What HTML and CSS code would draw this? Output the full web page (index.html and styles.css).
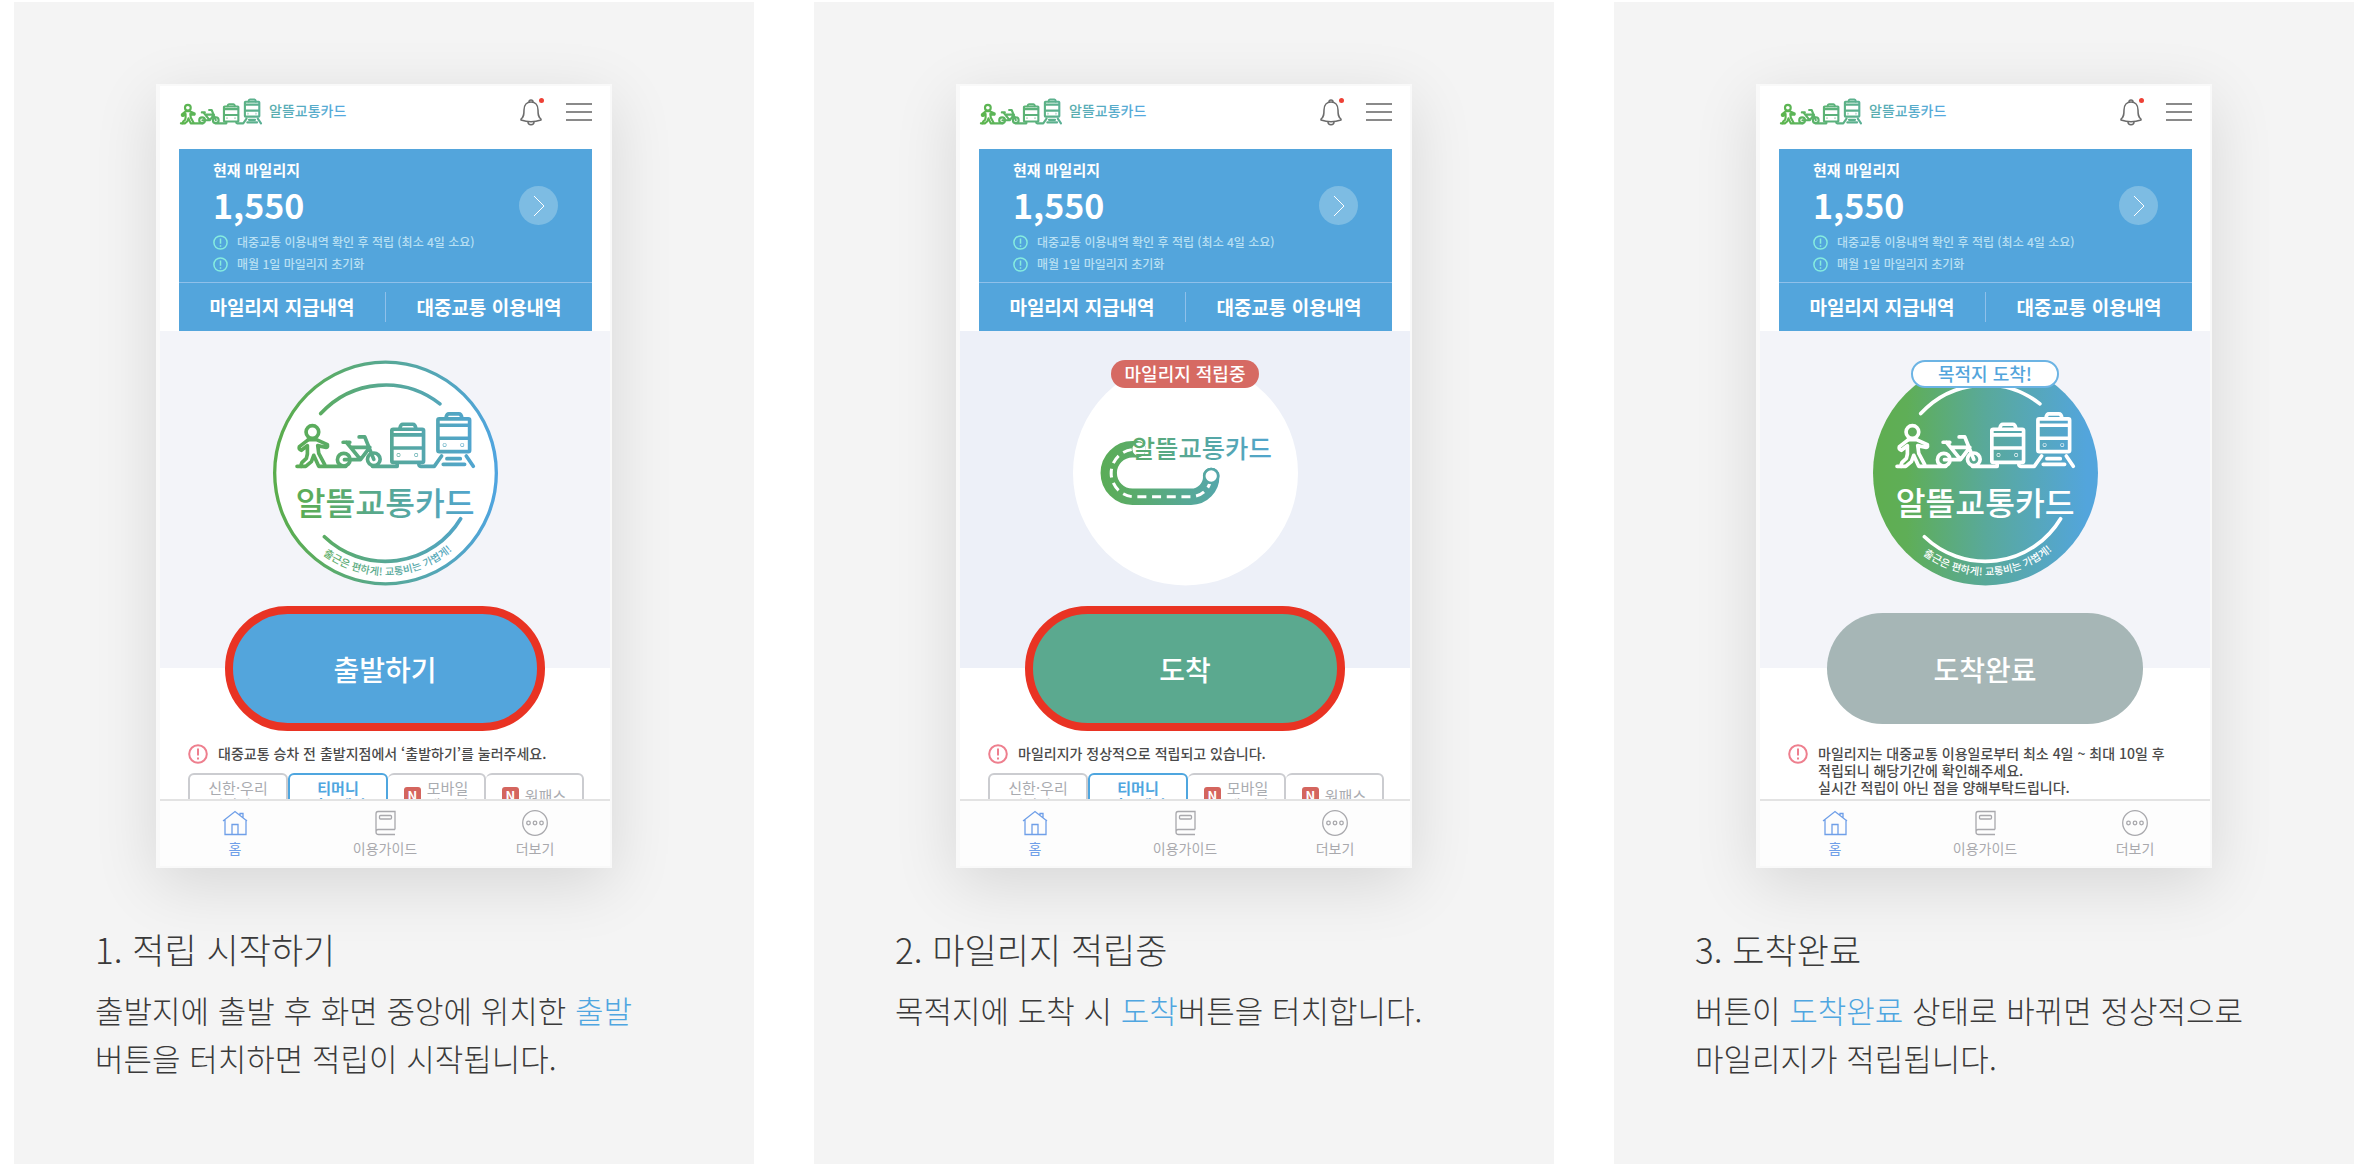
FILE: index.html
```html
<!DOCTYPE html>
<html lang="ko">
<head>
<meta charset="UTF-8" />
<meta name="viewport" content="width=device-width, initial-scale=1" />
<title>알뜰교통카드 이용방법</title>
<link rel="stylesheet" href="styles.css">
</head>
<body>

<!-- 공통 아이콘 -->
<svg class="sprite" width="0" height="0" aria-hidden="true">
  <defs>
    <linearGradient id="gradMark" gradientUnits="userSpaceOnUse" x1="370" y1="0" x2="1044" y2="0">
      <stop offset="0" stop-color="#5aad4b" />
      <stop offset="0.2" stop-color="#5bac5f" />
      <stop offset="0.5" stop-color="#57a894" />
      <stop offset="1" stop-color="#4fa4e0" />
    </linearGradient>
    <linearGradient id="gradFull" gradientUnits="userSpaceOnUse" x1="370" y1="0" x2="1044" y2="0">
      <stop offset="0" stop-color="#5fae50" />
      <stop offset="0.15" stop-color="#5fae57" />
      <stop offset="0.5" stop-color="#59a99a" />
      <stop offset="0.95" stop-color="#53a5dc" />
    </linearGradient>
    <linearGradient id="gradHead" gradientUnits="userSpaceOnUse" x1="438" y1="0" x2="1523" y2="0">
      <stop offset="0" stop-color="#5cb54c" />
      <stop offset="0.5" stop-color="#5bb096" />
      <stop offset="1" stop-color="#54a9e0" />
    </linearGradient>
    <linearGradient id="gradHeadText" gradientUnits="userSpaceOnUse" x1="60" y1="0" x2="166" y2="0">
      <stop offset="0" stop-color="#5bb096" />
      <stop offset="1" stop-color="#54a9e0" />
    </linearGradient>
  </defs>

  <symbol id="transport" viewBox="432 244 549 178">
    <g fill="none" stroke-linecap="round" stroke-linejoin="round">
      <circle cx="488" cy="308" r="19" />
      <path d="M476 331 L449 352 Q446 360 455 363 L473 349 V374 L470 387 L457 399 Q453 405 455 411" />
      <path d="M476 331 H500 L533 346 Q535 356 526 354 L504 349 L507 372 L525 406" />
      <path d="M442 411 H468 L485 397 L492 378 L507 411 H588" />
      <circle cx="582" cy="391" r="19" />
      <circle cx="672" cy="390" r="19" />
      <path d="M580 339 H600 M590 339 L632 390 M584 391 H632 L660 354 H604 M628 323 H645 L672 390" />
      <path d="M668 411 H742 V402 M807 402 Q806 411 813 411 H853 L875 380" />
      <rect x="726" y="300" width="95" height="99" rx="4" />
      <path d="M750 298 Q752 285 759 285 H789 Q796 285 798 298 M728 317 H819 M728 356 H819" />
      <circle class="dot" cx="746" cy="377" r="1" />
      <circle class="dot" cx="799" cy="377" r="1" />
      <rect x="864" y="269" width="95" height="98" rx="4" />
      <path d="M888 267 Q890 254 897 254 H927 Q934 254 936 267 M866 288 H957 M866 327 H957" />
      <circle class="dot" cx="884" cy="347" r="1" />
      <circle class="dot" cx="937" cy="347" r="1" />
      <path d="M891 388 H931 M880 405 H944 M949 380 L970 411" />
    </g>
  </symbol>

  <symbol id="emblem" viewBox="370 93 674 676">
    <use href="#transport" x="432" y="244" width="549" height="178" />
    <path d="M513 253 A263 263 0 0 1 870 224 M524 622 A263 263 0 0 0 932 568" fill="none" stroke-linecap="round" />
    <path id="sloganArc" d="M399 431 A307 307 0 0 0 1013 431" fill="none" stroke="none" />
    <text class="mark-text" x="706" y="556" text-anchor="middle">알뜰교통카드</text>
    <text class="mark-slogan" text-anchor="middle"><textPath href="#sloganArc" startOffset="51%">출근은 편하게! 교통비는 가볍게!</textPath></text>
  </symbol>

  <symbol id="bell" viewBox="0 0 24 28">
    <path d="M2 21 C5 19 5 16 5 12 C5 7 8 4 12 4 C16 4 19 7 19 12 C19 16 19 19 22 21 V22 C16 24 8 24 2 22 Z" fill="none" stroke="#6b6b6b" stroke-width="1.5" stroke-linejoin="round" />
    <path d="M10 4 C10 1.3 14 1.3 14 4 M9 24 C9 27.5 15 27.5 15 24" fill="none" stroke="#6b6b6b" stroke-width="1.5" />
  </symbol>

  <symbol id="alert" viewBox="0 0 20 20">
    <circle cx="10" cy="10" r="8.8" fill="none" stroke="currentColor" stroke-width="2" />
    <path d="M10 4.5 V11.5 M10 13.5 V15.5" fill="none" stroke="currentColor" stroke-width="2" />
  </symbol>

  <symbol id="home" viewBox="0 0 26 26">
    <path d="M1 11 L13 1.5 L25 11 M3 9.5 V24.5 H24 V9.5 M10 24.5 V14.5 H16 V24.5 M18 5 V3.5 H21 V8" fill="none" stroke="currentColor" stroke-width="1.3" />
  </symbol>

  <symbol id="book" viewBox="0 0 26 26">
    <path d="M23 19.5 V1.5 H6 Q4 1.5 4 4 V22 Q4 24.5 6.5 24.5 H23 M23 19.5 H6 Q4 19.5 4 22" fill="none" stroke="currentColor" stroke-width="1.3" />
    <rect x="7.5" y="5.5" width="12" height="3.5" rx="1" fill="none" stroke="currentColor" stroke-width="1.3" />
  </symbol>

  <symbol id="more" viewBox="0 0 26 26">
    <g fill="none" stroke="currentColor" stroke-width="1.3">
      <circle cx="13" cy="13" r="12.3" />
      <circle cx="6.5" cy="13" r="1.8" />
      <circle cx="13" cy="13" r="1.8" />
      <circle cx="19.5" cy="13" r="1.8" />
    </g>
  </symbol>
</svg>

<div class="steps">

  <!-- 1. 적립 시작하기 -->
  <section class="step">
    <div class="phone">
      <div class="phone-header">
        <svg class="logo" viewBox="0 0 168 28">
          <use class="head-line" href="#transport" x="0" y="0" width="84" height="27" />
          <text class="head-text" x="90" y="18">알뜰교통카드</text>
        </svg>
        <button class="icon-btn bell" aria-label="알림"><svg><use href="#bell" /></svg></button>
        <button class="icon-btn menu" aria-label="메뉴"><span></span><span></span><span></span></button>
      </div>
      <div class="mileage">
        <div class="mileage-top">
          <div class="mileage-info">
            <div class="mileage-label">현재 마일리지</div>
            <div class="mileage-value">1,550</div>
          </div>
          <button class="arrow" aria-label="자세히"><svg viewBox="0 0 12 22"><path d="M1 1 L11 11 L1 21" /></svg></button>
        </div>
        <ul class="mileage-notes">
          <li><svg><use href="#alert" /></svg>대중교통 이용내역 확인 후 적립 (최소 4일 소요)</li>
          <li><svg><use href="#alert" /></svg>매월 1일 마일리지 초기화</li>
        </ul>
        <div class="mileage-links">
          <a href="#">마일리지 지급내역</a>
          <a href="#">대중교통 이용내역</a>
        </div>
      </div>
      <div class="hero">
        <svg class="emblem emblem-line" viewBox="370 93 674 676">
          <circle class="ring" cx="707" cy="431" r="332" />
          <use href="#emblem" x="370" y="93" width="674" height="676" />
        </svg>
      </div>
      <div class="action"><button class="btn btn-start marked">출발하기</button></div>
      <div class="guide">
        <div class="notice">
          <svg><use href="#alert" /></svg>
          <p>대중교통 승차 전 출발지점에서 ‘출발하기’를 눌러주세요.</p>
        </div>
        <div class="tabs">
          <button class="tab">신한·우리<br>하나카드</button>
          <button class="tab active">티머니<br>카드페이</button>
          <button class="tab"><i>N</i><span>모바일<br>캐시비</span></button>
          <button class="tab"><i>N</i><span>원패스</span></button>
        </div>
      </div>
      <nav class="phone-nav">
        <a class="active" href="#"><svg><use href="#home" /></svg>홈</a>
        <a href="#"><svg><use href="#book" /></svg>이용가이드</a>
        <a href="#"><svg><use href="#more" /></svg>더보기</a>
      </nav>
    </div>
    <h2>1. 적립 시작하기</h2>
    <p class="desc">출발지에 출발 후 화면 중앙에 위치한 <em>출발</em> 버튼을 터치하면 적립이 시작됩니다.</p>
  </section>

  <!-- 2. 마일리지 적립중 -->
  <section class="step">
    <div class="phone">
      <div class="phone-header">
        <svg class="logo" viewBox="0 0 168 28">
          <use class="head-line" href="#transport" x="0" y="0" width="84" height="27" />
          <text class="head-text" x="90" y="18">알뜰교통카드</text>
        </svg>
        <button class="icon-btn bell" aria-label="알림"><svg><use href="#bell" /></svg></button>
        <button class="icon-btn menu" aria-label="메뉴"><span></span><span></span><span></span></button>
      </div>
      <div class="mileage">
        <div class="mileage-top">
          <div class="mileage-info">
            <div class="mileage-label">현재 마일리지</div>
            <div class="mileage-value">1,550</div>
          </div>
          <button class="arrow" aria-label="자세히"><svg viewBox="0 0 12 22"><path d="M1 1 L11 11 L1 21" /></svg></button>
        </div>
        <ul class="mileage-notes">
          <li><svg><use href="#alert" /></svg>대중교통 이용내역 확인 후 적립 (최소 4일 소요)</li>
          <li><svg><use href="#alert" /></svg>매월 1일 마일리지 초기화</li>
        </ul>
        <div class="mileage-links">
          <a href="#">마일리지 지급내역</a>
          <a href="#">대중교통 이용내역</a>
        </div>
      </div>
      <div class="hero hero-riding">
        <svg class="emblem emblem-road" viewBox="370 93 674 676">
          <circle class="plate" cx="707" cy="431" r="337" />
          <path class="road" d="M564 360 H548 A71 71 0 0 0 548 502 H724 A60 60 0 0 0 784 440" />
          <path class="lane" d="M546 361 A71 71 0 0 0 548 502 H724 A60 60 0 0 0 780 462" />
          <circle class="stop-hole" cx="568" cy="360" r="20" />
          <circle class="stop" cx="784" cy="440" r="21" />
          <text class="road-text" x="546" y="387">알뜰교통카드</text>
        </svg>
        <span class="badge badge-red">마일리지 적립중</span>
      </div>
      <div class="action"><button class="btn btn-arrive marked">도착</button></div>
      <div class="guide">
        <div class="notice">
          <svg><use href="#alert" /></svg>
          <p>마일리지가 정상적으로 적립되고 있습니다.</p>
        </div>
        <div class="tabs">
          <button class="tab">신한·우리<br>하나카드</button>
          <button class="tab active">티머니<br>카드페이</button>
          <button class="tab"><i>N</i><span>모바일<br>캐시비</span></button>
          <button class="tab"><i>N</i><span>원패스</span></button>
        </div>
      </div>
      <nav class="phone-nav">
        <a class="active" href="#"><svg><use href="#home" /></svg>홈</a>
        <a href="#"><svg><use href="#book" /></svg>이용가이드</a>
        <a href="#"><svg><use href="#more" /></svg>더보기</a>
      </nav>
    </div>
    <h2>2. 마일리지 적립중</h2>
    <p class="desc">목적지에 도착 시 <em>도착</em>버튼을 터치합니다.</p>
  </section>

  <!-- 3. 도착완료 -->
  <section class="step">
    <div class="phone">
      <div class="phone-header">
        <svg class="logo" viewBox="0 0 168 28">
          <use class="head-line" href="#transport" x="0" y="0" width="84" height="27" />
          <text class="head-text" x="90" y="18">알뜰교통카드</text>
        </svg>
        <button class="icon-btn bell" aria-label="알림"><svg><use href="#bell" /></svg></button>
        <button class="icon-btn menu" aria-label="메뉴"><span></span><span></span><span></span></button>
      </div>
      <div class="mileage">
        <div class="mileage-top">
          <div class="mileage-info">
            <div class="mileage-label">현재 마일리지</div>
            <div class="mileage-value">1,550</div>
          </div>
          <button class="arrow" aria-label="자세히"><svg viewBox="0 0 12 22"><path d="M1 1 L11 11 L1 21" /></svg></button>
        </div>
        <ul class="mileage-notes">
          <li><svg><use href="#alert" /></svg>대중교통 이용내역 확인 후 적립 (최소 4일 소요)</li>
          <li><svg><use href="#alert" /></svg>매월 1일 마일리지 초기화</li>
        </ul>
        <div class="mileage-links">
          <a href="#">마일리지 지급내역</a>
          <a href="#">대중교통 이용내역</a>
        </div>
      </div>
      <div class="hero">
        <svg class="emblem emblem-full" viewBox="370 93 674 676">
          <circle class="plate" cx="707" cy="431" r="337" />
          <use href="#emblem" x="370" y="93" width="674" height="676" />
        </svg>
        <span class="badge badge-white">목적지 도착!</span>
      </div>
      <div class="action"><button class="btn btn-done">도착완료</button></div>
      <div class="guide">
        <div class="notice">
          <svg><use href="#alert" /></svg>
          <p>마일리지는 대중교통 이용일로부터 최소 4일 ~ 최대 10일 후<br>적립되니 해당기간에 확인해주세요.<br>실시간 적립이 아닌 점을 양해부탁드립니다.</p>
        </div>
      </div>
      <nav class="phone-nav">
        <a class="active" href="#"><svg><use href="#home" /></svg>홈</a>
        <a href="#"><svg><use href="#book" /></svg>이용가이드</a>
        <a href="#"><svg><use href="#more" /></svg>더보기</a>
      </nav>
    </div>
    <h2>3. 도착완료</h2>
    <p class="desc">버튼이 <em>도착완료</em> 상태로 바뀌면 정상적으로 마일리지가 적립됩니다.</p>
  </section>

</div>

</body>
</html>
```
FILE: styles.css
```css
* {
  box-sizing: border-box;
}
body {
  margin: 0;
  background: #fff;
  color: #3a3a3a;
  font-family: 'Noto Sans CJK KR', 'Noto Sans', sans-serif;
  word-break: keep-all;
}
a {
  color: inherit;
  text-decoration: none;
}
button {
  margin: 0;
  padding: 0;
  border: none;
  background: none;
  font-family: inherit;
  cursor: pointer;
}
.sprite {
  position: absolute;
}

/* Steps */
.steps {
  display: grid;
  grid-template-columns: repeat(auto-fit, minmax(560px, 1fr));
  gap: 60px;
  padding: 2px 4px 0 14px;
}
.step {
  padding: 82px 81px;
  background: #f4f4f4;
}
.step h2 {
  margin: 56px 0 12px;
  font-size: 35px;
  line-height: 50px;
  font-weight: 300;
}
.desc {
  margin: 0;
  font-size: 31px;
  line-height: 48px;
  font-weight: 300;
}
.desc em {
  font-style: normal;
  color: #4fa6e0;
}

/* Phone */
.phone {
  width: 456px;
  max-width: 100%;
  margin: 0 auto;
  border: 2px solid #f9f9f9;
  border-left-width: 4px;
  background: #fff;
  box-shadow: 0 16px 60px rgba(0, 0, 0, 0.12);
}
.phone-header {
  display: flex;
  align-items: center;
  height: 63px;
  padding: 0 18px 11px 19px;
}
.logo {
  width: 168px;
  height: 28px;
  margin-right: auto;
}
.head-line {
  stroke: url(#gradHead);
  stroke-width: 14px;
}
.head-text {
  font-size: 14px;
  font-weight: 500;
  fill: url(#gradHeadText);
}
.bell {
  position: relative;
  height: 28px;
  margin-right: 23px;
}
.bell svg {
  display: block;
  width: 24px;
  height: 28px;
}
.bell::after {
  content: '';
  position: absolute;
  top: 0;
  right: -1px;
  width: 5px;
  height: 5px;
  border-radius: 50%;
  background: #ee4035;
}
.menu {
  display: flex;
  flex-direction: column;
  gap: 6px;
  width: 26px;
}
.menu span {
  height: 2px;
  background: #8a8a8a;
}

/* Mileage */
.mileage {
  margin: 0 18px 0 19px;
  background: #53a5dc;
  color: #fff;
}
.mileage-top {
  display: flex;
  align-items: center;
  justify-content: space-between;
  padding: 10px 34px 0;
}
.mileage-label {
  font-size: 15px;
  line-height: 22px;
  font-weight: 700;
}
.mileage-value {
  padding-bottom: 2px;
  font-size: 34px;
  line-height: 48px;
  font-weight: 700;
}
.arrow {
  width: 39px;
  height: 39px;
  margin-top: 21px;
  border-radius: 50%;
  background: #7dbce3;
}
.arrow svg {
  display: block;
  width: 12px;
  height: 22px;
  margin: 0 auto;
  fill: none;
  stroke: #fff;
  stroke-width: 1;
}
.mileage-notes {
  margin: 0;
  padding: 0 34px 7px;
  list-style: none;
  font-size: 12px;
  line-height: 22px;
  font-weight: 500;
  color: #b9e0f3;
}
.mileage-notes li {
  display: flex;
  align-items: center;
}
.mileage-notes svg {
  width: 15px;
  height: 15px;
  margin-right: 9px;
  color: #86ecdf;
}
.mileage-links {
  display: flex;
  align-items: center;
  height: 49px;
  border-top: 1px solid #8fc0ea;
}
.mileage-links a {
  flex: 1;
  line-height: 30px;
  text-align: center;
  font-size: 19px;
  font-weight: 700;
}
.mileage-links a + a {
  border-left: 1px solid #8fc0ea;
}

/* Hero */
.hero {
  position: relative;
  display: flex;
  justify-content: center;
  height: 337px;
  padding-top: 29px;
  background: #f3f4f9;
}
.hero-riding {
  background: #edf0f8;
}
.emblem {
  width: 225px;
  height: 226px;
  stroke-width: 11px;
}
.dot {
  stroke-width: 10px;
}
.ring {
  fill: #fff;
  stroke-width: 10px;
}
.emblem-line {
  stroke: url(#gradMark);
  fill: url(#gradMark);
}
.emblem-full {
  stroke: #fff;
  fill: #fff;
}
.emblem-full .plate {
  fill: url(#gradFull);
  stroke: none;
}
.mark-text {
  font-size: 97px;
  font-weight: 500;
  stroke: none;
}
.mark-slogan {
  font-size: 31px;
  font-weight: 500;
  stroke: none;
}
.emblem-road .plate,
.stop-hole {
  fill: #fff;
}
.road {
  fill: none;
  stroke: url(#gradMark);
  stroke-width: 49px;
  stroke-linecap: round;
}
.lane {
  fill: none;
  stroke: #fff;
  stroke-width: 9px;
  stroke-dasharray: 27 17;
}
.stop {
  fill: #fff;
  stroke: url(#gradMark);
  stroke-width: 8px;
}
.road-text {
  font-size: 76px;
  font-weight: 500;
  fill: url(#gradMark);
}
.badge {
  position: absolute;
  top: 29px;
  left: 50%;
  transform: translateX(-50%);
  width: 148px;
  height: 28px;
  border-radius: 14px;
  text-align: center;
  white-space: nowrap;
  font-size: 18px;
  line-height: 26px;
  font-weight: 500;
}
.badge-red {
  background: #d66a63;
  color: #fff;
}
.badge-white {
  border: 2px solid #6cb4e4;
  background: #fff;
  color: #53a5dc;
  line-height: 22px;
}

/* Action button */
.action {
  position: relative;
  display: flex;
  align-items: center;
  justify-content: center;
  height: 125px;
  margin-top: -62px;
}
.btn {
  width: 316px;
  height: 111px;
  border-radius: 63px;
  color: #fff;
  font-size: 28px;
  font-weight: 500;
}
.btn.marked {
  width: 320px;
  height: 125px;
  border: 8px solid #e93323;
}
.btn-start {
  background: #53a5dc;
}
.btn-arrive {
  background: #5ba98f;
}
.btn-done {
  background: #a6b6b6;
}

/* Guide */
.guide {
  height: 68px;
  padding: 13px 26px 0 28px;
  overflow: hidden;
}
.notice {
  display: flex;
  gap: 10px;
}
.notice svg {
  flex: none;
  width: 20px;
  height: 20px;
  color: #ee7f8e;
}
.notice p {
  margin: 1px 0 0;
  font-size: 14px;
  line-height: 17px;
  font-weight: 500;
  color: #4a4a4a;
  white-space: nowrap;
}
.tabs {
  display: flex;
  margin-top: 9px;
}
.tab {
  display: flex;
  flex: 1;
  align-items: center;
  justify-content: center;
  gap: 6px;
  height: 45px;
  border: 2px solid #cbccd0;
  border-left-width: 0;
  border-radius: 6px;
  font-size: 15px;
  line-height: 17px;
  color: #a9abb0;
}
.tab:first-child {
  border-left-width: 2px;
}
.tab.active {
  border: 2px solid #4fa6df;
  color: #4fa6df;
  font-weight: 700;
}
.tab i {
  width: 17px;
  height: 17px;
  border-radius: 3px;
  background: #d4655e;
  color: #fff;
  font-size: 13px;
  font-style: normal;
  font-weight: 700;
}

/* Bottom nav */
.phone-nav {
  display: flex;
  height: 67px;
  padding-top: 9px;
  border-top: 2px solid #e3e3e3;
  background: #fdfdfd;
}
.phone-nav a {
  flex: 1;
  display: flex;
  flex-direction: column;
  align-items: center;
  font-size: 14px;
  line-height: 24px;
  color: #a9a9ad;
}
.phone-nav svg {
  width: 26px;
  height: 26px;
}
.phone-nav a.active {
  color: #6f9fe8;
}
```
